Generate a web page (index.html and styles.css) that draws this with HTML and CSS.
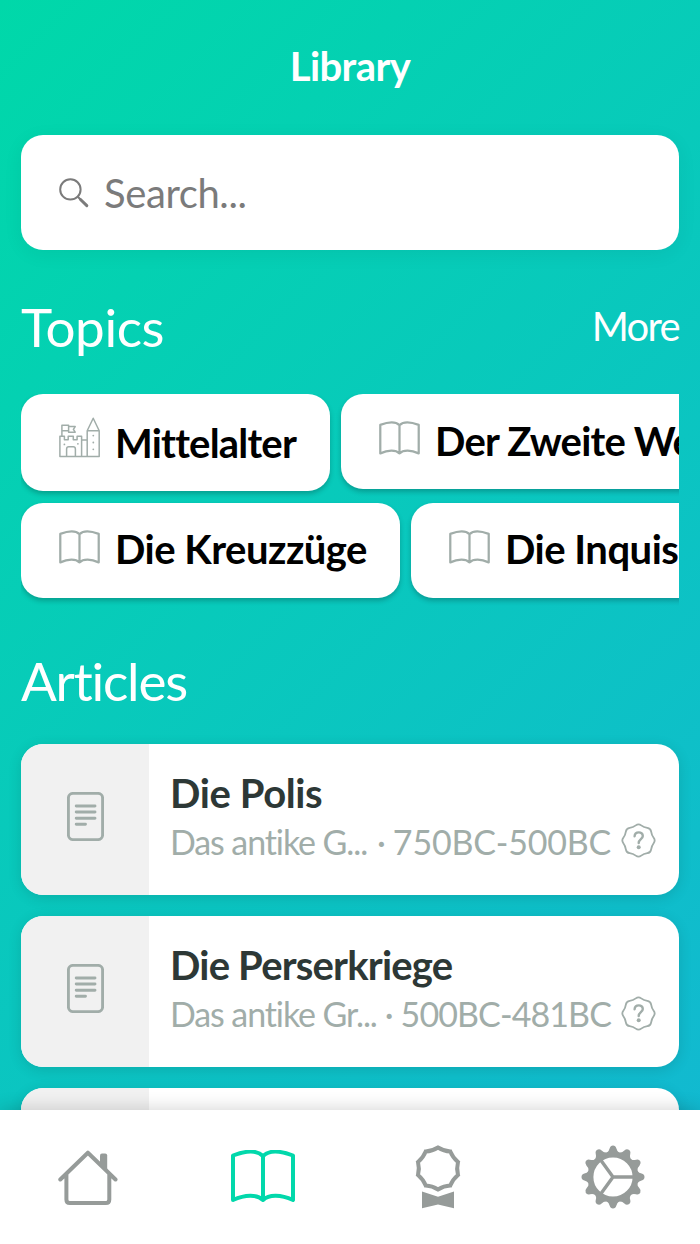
FILE: index.html
```html
<!DOCTYPE html>
<html lang="en">
<head>
  <meta charset="UTF-8" />
  <meta name="viewport" content="width=device-width, initial-scale=1.0"/>
  <title>Library</title>
  <link rel="stylesheet" href="styles.css">
</head>
<body>

  <!-- Shared icons -->
  <svg class="sprite" width="0" height="0">
    <symbol id="book" viewBox="0 0 64 52">
      <path d="M32 6C26 0 14 1 2 5.5V50C14 44.5 26 44 32 50C38 44 50 44.5 62 50V5.5C50 1 38 0 32 6V50"/>
    </symbol>
    <symbol id="doc" viewBox="0 0 37 49">
      <rect x="1.4" y="1.4" width="34.2" height="46.2" rx="4.6"/>
      <path d="M9.2 14H28M9.2 20H28M9.2 26.2H28M9.2 32.2H18.5"/>
    </symbol>
    <symbol id="question" viewBox="-17.5 -17.5 35 35">
      <path d="M-2.7 -15.15Q0 -17.2 2.7 -15.15Q5.4 -13.1 8.8 -12.65Q12.2 -12.2 12.65 -8.8Q13.1 -5.4 15.15 -2.7Q17.2 0 15.15 2.7Q13.1 5.4 12.65 8.8Q12.2 12.2 8.8 12.65Q5.4 13.1 2.7 15.15Q0 17.2 -2.7 15.15Q-5.4 13.1 -8.8 12.65Q-12.2 12.2 -12.65 8.8Q-13.1 5.4 -15.15 2.7Q-17.2 0 -15.15 -2.7Q-13.1 -5.4 -12.65 -8.8Q-12.2 -12.2 -8.8 -12.65Q-5.4 -13.1 -2.7 -15.15Z"/>
      <path class="mark" d="M-3.9 -4.3C-3.6 -9.3 4.3 -9.3 4.3 -4.5C4.3 -1.3 0.2 -1.2 0.2 2.6"/>
      <circle class="dot" cx="0.2" cy="6.8" r="2"/>
    </symbol>
  </svg>

  <div class="screen">
    <div class="content">
      <h1>Library</h1>

      <!-- Search -->
      <div class="search">
        <svg width="30" height="30" viewBox="0 0 30 30">
          <circle cx="11.4" cy="11.4" r="10.2"/>
          <path d="M18.8 18.8L22 22"/>
          <path class="handle" d="M21.5 21.5L27.8 27.6"/>
        </svg>
        <span>Search...</span>
      </div>

      <!-- Topics -->
      <div class="section-head">
        <h2 class="topics-title">Topics</h2>
        <a class="more">More</a>
      </div>
      <div class="topics">
        <div class="topic-row">
          <div class="topic tall">
            <svg class="castle" width="41" height="41" viewBox="0 0 41 41">
              <path d="M0.9 39.6V19.2H5.4V22.7H9.2V19.2H14.3V22.7H18.1V19.2H22.6V39.6ZM22.6 22.9H28.2M28.2 39.6V13.8H40.2V39.6ZM28.2 13.8L34.2 1.2L40.2 13.8M22.6 39.6H28.2M2.9 19.2V8.3H9.6V13.8H2.9M9.6 9.6H16.2L14.4 12.4L16.2 15.2H9.6V13.6M7.6 39.6V32Q7.6 29.8 9.8 29.8H14.2Q16.4 29.8 16.4 32V39.6"/>
              <circle cx="5.4" cy="27.4" r="0.9"/>
              <circle cx="18.9" cy="26.8" r="0.9"/>
              <circle cx="34.3" cy="18.6" r="0.9"/>
              <circle cx="34.3" cy="25.5" r="0.9"/>
              <circle cx="34.3" cy="32.3" r="0.9"/>
            </svg>
            <span>Mittelalter</span>
          </div>
          <div class="topic">
            <svg class="book" width="41" height="34"><use href="#book"/></svg>
            <span>Der Zweite Weltkrieg</span>
          </div>
        </div>
        <div class="topic-row">
          <div class="topic wide">
            <svg class="book" width="41" height="34"><use href="#book"/></svg>
            <span>Die Kreuzzüge</span>
          </div>
          <div class="topic wide">
            <svg class="book" width="41" height="34"><use href="#book"/></svg>
            <span>Die Inquisition</span>
          </div>
        </div>
      </div>

      <!-- Articles -->
      <h2 class="articles-title">Articles</h2>
      <div class="articles">
        <div class="article">
          <div class="thumb"><svg class="doc" width="37" height="49"><use href="#doc"/></svg></div>
          <div class="info">
            <h3>Die Polis</h3>
            <div class="meta">
              <span class="topic-name">Das antike G...</span>
              <span class="sep">·</span>
              <span class="years">750BC-500BC</span>
              <svg class="question" width="35" height="35"><use href="#question"/></svg>
            </div>
          </div>
        </div>
        <div class="article">
          <div class="thumb"><svg class="doc" width="37" height="49"><use href="#doc"/></svg></div>
          <div class="info">
            <h3 class="long">Die Perserkriege</h3>
            <div class="meta">
              <span class="topic-name">Das antike Gr...</span>
              <span class="sep">·</span>
              <span class="years late">500BC-481BC</span>
              <svg class="question low" width="35" height="35"><use href="#question"/></svg>
            </div>
          </div>
        </div>
        <div class="article">
          <div class="thumb"></div>
          <div class="info"></div>
        </div>
      </div>
    </div>

    <!-- Bottom navigation -->
    <div class="navbar">
      <a>
        <svg class="home" width="60" height="56" viewBox="0 0 60 56">
          <path d="M2.3 29.5L29.9 2.7L57.5 29.5M8.4 24.5V49.5Q8.4 53 11.9 53H47.8Q51.3 53 51.3 49.5V24.5"/>
          <path class="fill" d="M42 15V5.5Q42 3.5 44 3.5H47.2Q49.2 3.5 49.2 5.5V21Z"/>
        </svg>
      </a>
      <a class="active">
        <svg class="nav-book" width="64" height="52"><use href="#book"/></svg>
      </a>
      <a>
        <svg class="medal" width="46" height="64" viewBox="-23 -23.5 46 64">
          <path d="M0 -21Q5.7 -17.4 12.3 -17Q14.8 -10.8 20 -6.5Q18.3 0 20 6.5Q14.8 10.8 12.3 17Q5.7 17.4 0 21Q-5.7 17.4 -12.3 17Q-14.8 10.8 -20 6.5Q-18.3 0 -20 -6.5Q-14.8 -10.8 -12.3 -17Q-5.7 -17.4 0 -21Z"/>
          <path class="fill" d="M-16 23L0 28.2L16 23V39.8L0 36L-16 39.8Z"/>
        </svg>
      </a>
      <a>
        <svg class="gear" width="64" height="64" viewBox="-32 -32 64 64">
          <circle r="22.6"/>
          <path d="M0 0H21M0 0L-12.3 -17M0 0L-12.3 17"/>
          <g class="fill">
            <path id="tooth" d="M-6 -24.5Q-4 -26 -3.4 -28.6Q-2.6 -31.5 0 -31.5Q2.6 -31.5 3.4 -28.6Q4 -26 6 -24.5L5 -21H-5Z"/>
            <use href="#tooth" transform="rotate(30)"/>
            <use href="#tooth" transform="rotate(60)"/>
            <use href="#tooth" transform="rotate(90)"/>
            <use href="#tooth" transform="rotate(120)"/>
            <use href="#tooth" transform="rotate(150)"/>
            <use href="#tooth" transform="rotate(180)"/>
            <use href="#tooth" transform="rotate(210)"/>
            <use href="#tooth" transform="rotate(240)"/>
            <use href="#tooth" transform="rotate(270)"/>
            <use href="#tooth" transform="rotate(300)"/>
            <use href="#tooth" transform="rotate(330)"/>
          </g>
        </svg>
      </a>
    </div>
  </div>

</body>
</html>
```
FILE: styles.css
```css
* {
  box-sizing: border-box;
}

body {
  margin: 0;
  font-family: Lato, 'Open Sans', sans-serif;
  font-variant-ligatures: none;
  color: #fff;
}

svg {
  display: block;
  flex-shrink: 0;
  fill: none;
  stroke: currentColor;
  stroke-linecap: round;
  stroke-linejoin: round;
}

.sprite {
  position: absolute;
}

.screen {
  display: flex;
  flex-direction: column;
  height: 100vh;
  background: linear-gradient(135deg, #00d8a9, #13b7d3);
}

.content {
  flex: 1;
  min-height: 0;
  overflow: hidden;
  padding: 0 21px;
}

h1, h2, h3 {
  margin: 0;
}

h1 {
  height: 135px;
  padding-top: 42px;
  text-align: center;
  font-size: 40px;
  line-height: 48px;
  letter-spacing: -0.6px;
}

/* Search */
.search {
  display: flex;
  align-items: center;
  gap: 15px;
  height: 115px;
  padding: 0 38px;
  border-radius: 22px;
  background: #fff;
  color: #7b7b7b;
  box-shadow: 0 4px 20px rgba(0,0,0,0.06);
}

.search svg {
  margin-top: 1px;
  stroke-width: 2;
}

.search .handle {
  stroke-width: 3;
}

.search span {
  font-size: 40px;
  line-height: 48px;
  letter-spacing: -0.4px;
}

/* Section headings */
h2 {
  font-size: 53px;
  font-weight: 400;
  line-height: 64px;
}

.topics-title {
  letter-spacing: -0.4px;
}

.section-head {
  display: flex;
  justify-content: space-between;
  align-items: flex-start;
  margin-top: 45px;
}

.more {
  padding-top: 7px;
  font-size: 40px;
  line-height: 48px;
  letter-spacing: -1.7px;
}

/* Topics */
.topics {
  display: flex;
  flex-direction: column;
  gap: 12px;
  height: 216px;
  margin-top: 35px;
  overflow: hidden;
}

.topic-row {
  display: flex;
  align-items: flex-start;
  gap: 11px;
}

.topic {
  display: flex;
  align-items: center;
  flex-shrink: 0;
  gap: 15px;
  height: 95px;
  padding: 0 34px 0 38px;
  border-radius: 22px;
  background: #fff;
  color: #000;
  font-size: 40px;
  font-weight: 700;
  line-height: 48px;
  letter-spacing: -0.8px;
  white-space: nowrap;
  box-shadow: 0 3px 5px rgba(0,0,0,0.22);
}

.topic.tall {
  height: 97px;
}

.topic.wide {
  padding-right: 33px;
  letter-spacing: -0.5px;
}

.topic span {
  padding-bottom: 2px;
}

.topic.tall span {
  padding-bottom: 0;
}

.topic.wide span {
  padding-bottom: 3px;
}

.topic svg {
  color: #a1ada9;
}

.book {
  margin-bottom: 8px;
  stroke-width: 3.5;
}

.castle {
  margin-bottom: 10px;
  stroke-width: 1.5;
}

.castle circle {
  fill: currentColor;
  stroke: none;
}

/* Articles */
.articles-title {
  margin-top: 39px;
  letter-spacing: -1.2px;
}

.articles {
  display: flex;
  flex-direction: column;
  gap: 21px;
  margin-top: 31px;
}

.article {
  display: flex;
  height: 151px;
  border-radius: 22px;
  background: #fff;
  box-shadow: 0 3px 14px rgba(0,0,0,0.12);
}

.thumb {
  display: flex;
  flex-shrink: 0;
  align-items: center;
  justify-content: center;
  width: 128px;
  padding-bottom: 6px;
  border-radius: 22px 0 0 22px;
  background: #f1f1f1;
  color: #a1ada9;
}

.doc {
  stroke-width: 2.9;
}

.info {
  flex: 1;
  min-width: 0;
  padding: 25px 23px 0 21px;
}

.info h3 {
  color: #2d3836;
  font-size: 40px;
  line-height: 48px;
  letter-spacing: -0.4px;
}

.info h3.long {
  letter-spacing: -0.8px;
}

.meta {
  display: flex;
  align-items: center;
  justify-content: space-between;
  margin-top: 4px;
  color: #a1ada9;
  font-size: 34px;
  line-height: 41px;
  white-space: nowrap;
}

.topic-name {
  letter-spacing: -1.1px;
}

.sep {
  margin-left: auto;
  margin-right: 7px;
}

.years {
  letter-spacing: -0.2px;
}

.years.late {
  letter-spacing: -0.9px;
}

.question {
  margin-left: 10px;
  margin-bottom: 3px;
  stroke-width: 1.8;
}

.question.low {
  margin-bottom: 0;
}

.mark {
  stroke-width: 2.4;
}

.dot {
  fill: currentColor;
  stroke: none;
}

/* Bottom navigation */
.navbar {
  display: grid;
  grid-template-columns: repeat(4, 1fr);
  height: 134px;
  background: #fff;
  color: #969b99;
  position: relative;
  box-shadow: 0 -2px 16px rgba(0,0,0,0.16);
}

.navbar a {
  display: flex;
  align-items: center;
  justify-content: center;
}

.navbar a.active {
  color: #02d8ab;
}

.navbar svg {
  stroke-width: 4;
}

.navbar .home {
  margin-top: 2px;
}

.navbar .nav-book {
  margin-bottom: 3px;
}

.navbar .medal {
  stroke-linejoin: miter;
}

.gear circle {
  stroke-width: 6;
}

.gear path {
  stroke-width: 3.4;
}

.navbar .fill,
.navbar .fill path {
  fill: currentColor;
  stroke: none;
}
```
